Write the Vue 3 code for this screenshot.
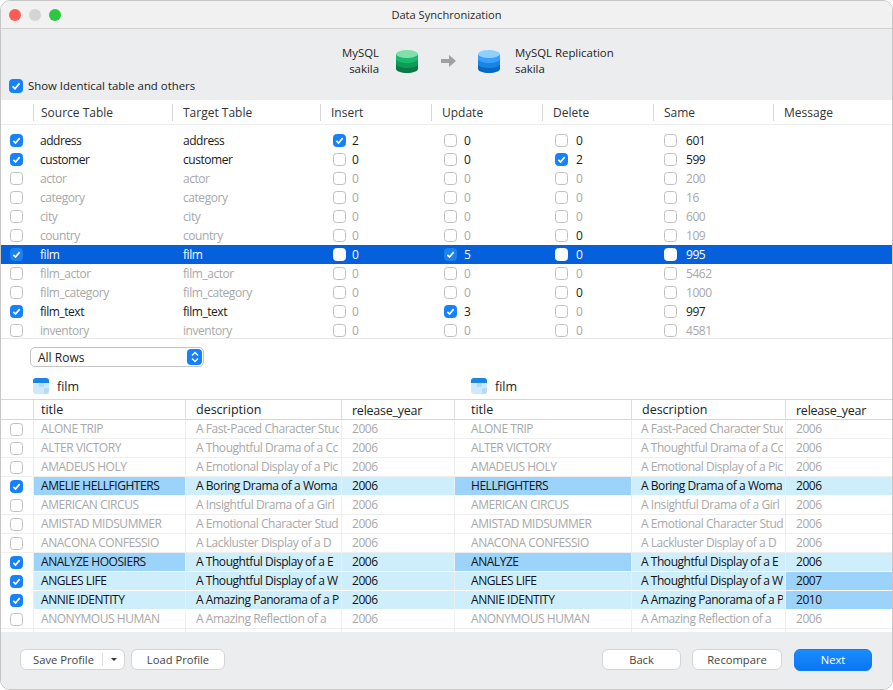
<script setup>
// cell = [value, checked, drawn dark]; active rows have a dark name and Same count
const syncRows = [
  { name: 'address', on: true, active: true, ins: [2, true, true], upd: [0, false, true], del: [0, false, true], same: 601 },
  { name: 'customer', on: true, active: true, ins: [0, false, true], upd: [0, false, true], del: [2, true, true], same: 599 },
  { name: 'actor', ins: [0], upd: [0], del: [0], same: 200 },
  { name: 'category', ins: [0], upd: [0], del: [0], same: 16 },
  { name: 'city', ins: [0], upd: [0], del: [0], same: 600 },
  { name: 'country', ins: [0], upd: [0], del: [0, false, true], same: 109 },
  { name: 'film', on: true, selected: true, ins: [0], upd: [5, true], del: [0], same: 995 },
  { name: 'film_actor', ins: [0], upd: [0], del: [0], same: 5462 },
  { name: 'film_category', ins: [0], upd: [0], del: [0, false, true], same: 1000 },
  { name: 'film_text', on: true, active: true, ins: [0], upd: [3, true, true], del: [0], same: 997 },
  { name: 'inventory', ins: [0], upd: [0], del: [0], same: 4581 }
]

const syncColumns = ['ins', 'upd', 'del']

// hi: cells with the darker blue
const dataRows = [
  { on: false, hi: [], cells: ['ALONE TRIP', 'A Fast-Paced Character Stuc', '2006', 'ALONE TRIP', 'A Fast-Paced Character Stuc', '2006'] },
  { on: false, hi: [], cells: ['ALTER VICTORY', 'A Thoughtful Drama of a Cc', '2006', 'ALTER VICTORY', 'A Thoughtful Drama of a Cc', '2006'] },
  { on: false, hi: [], cells: ['AMADEUS HOLY', 'A Emotional Display of a Pic', '2006', 'AMADEUS HOLY', 'A Emotional Display of a Pic', '2006'] },
  { on: true, hi: [0, 3], cells: ['AMELIE HELLFIGHTERS', 'A Boring Drama of a Woma', '2006', 'HELLFIGHTERS', 'A Boring Drama of a Woma', '2006'] },
  { on: false, hi: [], cells: ['AMERICAN CIRCUS', 'A Insightful Drama of a Girl', '2006', 'AMERICAN CIRCUS', 'A Insightful Drama of a Girl', '2006'] },
  { on: false, hi: [], cells: ['AMISTAD MIDSUMMER', 'A Emotional Character Stud', '2006', 'AMISTAD MIDSUMMER', 'A Emotional Character Stud', '2006'] },
  { on: false, hi: [], cells: ['ANACONA CONFESSIO', 'A Lackluster Display of a D', '2006', 'ANACONA CONFESSIO', 'A Lackluster Display of a D', '2006'] },
  { on: true, hi: [0, 3], cells: ['ANALYZE HOOSIERS', 'A Thoughtful Display of a E', '2006', 'ANALYZE', 'A Thoughtful Display of a E', '2006'] },
  { on: true, hi: [5], cells: ['ANGLES LIFE', 'A Thoughtful Display of a W', '2006', 'ANGLES LIFE', 'A Thoughtful Display of a W', '2007'] },
  { on: true, hi: [5], cells: ['ANNIE IDENTITY', 'A Amazing Panorama of a P', '2006', 'ANNIE IDENTITY', 'A Amazing Panorama of a P', '2010'] },
  { on: false, hi: [], cells: ['ANONYMOUS HUMAN', 'A Amazing Reflection of a', '2006', 'ANONYMOUS HUMAN', 'A Amazing Reflection of a', '2006'] }
]

const dataHeads = ['title', 'description', 'release_year', 'title', 'description', 'release_year']
</script>

<template>
  <div class="window">
    <div class="titlebar">
      <div class="lights">
        <span class="light red"></span>
        <span class="light grey"></span>
        <span class="light green"></span>
      </div>
      <span class="title">Data Synchronization</span>
    </div>

    <div class="connection">
      <div class="endpoints">
        <div class="endpoint source">MySQL<br />sakila</div>
        <svg class="db" width="22" height="23" viewBox="0 0 22 23">
          <path d="M0 4v15c0 2 5 4 11 4s11-2 11-4V4z" fill="#0a7a44" />
          <path d="M0 4v10c0 2 5 4 11 4s11-2 11-4V4z" fill="#0f9a58" />
          <path d="M0 4v5c0 2 5 4 11 4s11-2 11-4V4z" fill="#17b96b" />
          <ellipse cx="11" cy="4" rx="11" ry="4" fill="#7fe0a9" />
        </svg>
        <svg class="arrow" width="15" height="12" viewBox="0 0 15 12">
          <path d="M0 4h8V0l7 6-7 6V8H0z" fill="#a0a0a0" />
        </svg>
        <svg class="db" width="22" height="23" viewBox="0 0 22 23">
          <path d="M0 4v15c0 2 5 4 11 4s11-2 11-4V4z" fill="#0469c4" />
          <path d="M0 4v10c0 2 5 4 11 4s11-2 11-4V4z" fill="#1a84e4" />
          <path d="M0 4v5c0 2 5 4 11 4s11-2 11-4V4z" fill="#38a0fb" />
          <ellipse cx="11" cy="4" rx="11" ry="4" fill="#8fd0fd" />
        </svg>
        <div class="endpoint target">MySQL Replication<br />sakila</div>
      </div>
      <label class="show-identical">
        <span class="box big checked">
          <svg viewBox="0 0 14 14"><path d="M3 7.4l2.8 2.8 5.2-6.2" /></svg>
        </span>
        Show Identical table and others
      </label>
    </div>

    <div class="sync-head sync-grid">
      <span></span>
      <span class="first">Source Table</span>
      <span>Target Table</span>
      <span>Insert</span>
      <span>Update</span>
      <span>Delete</span>
      <span>Same</span>
      <span>Message</span>
    </div>

    <div class="sync-body">
      <div
        v-for="row in syncRows"
        :key="row.name"
        class="sync-row sync-grid"
        :class="{ active: row.active, selected: row.selected }"
      >
        <div class="cell-check">
          <span class="box" :class="{ checked: row.on }">
            <svg v-if="row.on" viewBox="0 0 14 14"><path d="M3 7.4l2.8 2.8 5.2-6.2" /></svg>
          </span>
        </div>
        <div class="first name">{{ row.name }}</div>
        <div class="name">{{ row.name }}</div>
        <div v-for="col in syncColumns" :key="col" class="cell-count" :class="col">
          <span class="box" :class="{ checked: row[col][1] }">
            <svg v-if="row[col][1]" viewBox="0 0 14 14"><path d="M3 7.4l2.8 2.8 5.2-6.2" /></svg>
          </span>
          <span :class="{ dark: row[col][2] }">{{ row[col][0] }}</span>
        </div>
        <div class="cell-count same">
          <span class="box"></span>
          <span class="name">{{ row.same }}</span>
        </div>
        <div></div>
      </div>
    </div>

    <div class="detail">
      <div class="filter-row">
        <div class="select">
          All Rows
          <span class="select-btn">
            <svg width="10" height="14" viewBox="0 0 10 14"><path d="M2 5.5L5 2.5l3 3M2 8.5l3 3 3-3" /></svg>
          </span>
        </div>
      </div>
      <div class="table-labels">
        <div class="table-label">
          <svg width="16" height="16" viewBox="0 0 16 16">
            <rect width="16" height="16" rx="3" fill="#cfe8fc" />
            <path d="M0 5V3a3 3 0 0 1 3-3h10a3 3 0 0 1 3 3v2z" fill="#1b86e2" />
            <path d="M6 5h5v4H6zM11 10h5v3a3 3 0 0 1-3 3h-2z" fill="#b3dbfa" />
          </svg>
          film
        </div>
        <div class="table-label right">
          <svg width="16" height="16" viewBox="0 0 16 16">
            <rect width="16" height="16" rx="3" fill="#cfe8fc" />
            <path d="M0 5V3a3 3 0 0 1 3-3h10a3 3 0 0 1 3 3v2z" fill="#1b86e2" />
            <path d="M6 5h5v4H6zM11 10h5v3a3 3 0 0 1-3 3h-2z" fill="#b3dbfa" />
          </svg>
          film
        </div>
      </div>

      <div class="data-head data-grid">
        <span></span>
        <span v-for="(head, i) in dataHeads" :key="i">{{ head }}</span>
      </div>
      <div
        v-for="(row, r) in dataRows"
        :key="r"
        class="data-row data-grid"
        :class="{ changed: row.on }"
      >
        <div class="cell-check">
          <span class="box" :class="{ checked: row.on }">
            <svg v-if="row.on" viewBox="0 0 14 14"><path d="M3 7.4l2.8 2.8 5.2-6.2" /></svg>
          </span>
        </div>
        <div v-for="(cell, i) in row.cells" :key="i" :class="{ hi: row.hi.includes(i) }">{{ cell }}</div>
      </div>
      <div class="data-tail data-grid">
        <span></span><span></span><span></span><span></span><span></span><span></span><span></span>
      </div>
    </div>

    <div class="footer">
      <div class="split-btn">
        <span class="split-main">Save Profile</span>
        <span class="split-caret"></span>
      </div>
      <button class="btn load">Load Profile</button>
      <span class="spacer"></span>
      <button class="btn back">Back</button>
      <button class="btn recompare">Recompare</button>
      <button class="btn next">Next</button>
    </div>
  </div>
</template>

<style>
html,
body {
  margin: 0;
  background: #fff;
}
</style>

<style scoped>
.window {
  box-sizing: border-box;
  width: 893px;
  height: 690px;
  display: flex;
  flex-direction: column;
  border: 1px solid #c6c6c6;
  border-radius: 10px;
  overflow: hidden;
  background: #fff;
  color: #222;
  font-family: "Open Sans", "Noto Sans", sans-serif;
  font-size: 12px;
}

.titlebar {
  flex: none;
  height: 27px;
  display: flex;
  align-items: center;
  justify-content: center;
  position: relative;
  background: #f1f1f1;
  border-bottom: 1px solid #d2d2d2;
}
.lights {
  position: absolute;
  left: 8px;
  top: 8px;
  display: flex;
  gap: 8px;
}
.light {
  width: 12px;
  height: 12px;
  border-radius: 50%;
}
.light.red { background: #fc5c57; }
.light.grey { background: #d4d4d4; }
.light.green { background: #2bc840; }
.title { color: #2a2a2a; font-size: 11.1px; }

.connection {
  flex: none;
  height: 71px;
  background: #ecedef;
  position: relative;
  font-size: 11.4px;
}
.endpoints {
  display: flex;
  align-items: center;
  height: 40px;
  padding-top: 12px;
  margin-left: 340px;
  line-height: 16px;
}
.endpoint { width: 38px; }
.endpoint.source { text-align: right; }
.endpoint.target { width: auto; margin-left: 15px; }
.db { margin-left: 17px; }
.arrow { margin-left: 23px; }
.arrow + .db { margin-left: 22px; }
.show-identical {
  position: absolute;
  left: 8px;
  top: 49px;
  display: flex;
  align-items: center;
  gap: 5px;
}

.box {
  box-sizing: border-box;
  flex: none;
  width: 13px;
  height: 13px;
  display: inline-block;
  background: #fff;
  border: 1px solid #c0c0c0;
  border-radius: 3.5px;
}
.box.big { width: 14px; height: 14px; }
.box svg {
  display: block;
  width: 100%;
  height: 100%;
  fill: none;
  stroke: #fff;
  stroke-width: 2.1;
}
.box.checked {
  background: #1581fa;
  border-color: #1581fa;
}

.sync-grid {
  display: grid;
  grid-template-columns: 32px 139px 148px 111px 111px 111px 120px 119px;
}
.sync-head {
  flex: none;
  height: 25px;
  line-height: 25px;
  border-bottom: 1px solid #ececec;
  box-sizing: border-box;
  color: #333;
}
.sync-head span {
  padding-left: 11px;
  position: relative;
}
.sync-head span.first { padding-left: 8px; }
.sync-head span + span::before {
  content: "";
  position: absolute;
  left: 0;
  top: 4px;
  bottom: 4px;
  border-left: 1px solid #d6d6d6;
}
.sync-body {
  flex: none;
  height: 214px;
  padding-top: 6px;
  box-sizing: border-box;
  overflow: hidden;
  border-bottom: 1px solid #e6e6e6;
}
.sync-row {
  height: 19px;
  line-height: 19px;
  color: #a8a8a8;
}
.sync-row > div {
  padding-left: 11px;
  white-space: nowrap;
  display: flex;
  align-items: center;
}
.sync-row > div.first { padding-left: 7px; }
.sync-row > div.cell-check { padding-left: 9px; }
.sync-row > div.cell-count {
  padding-left: 13px;
  gap: 7px;
}
.sync-row > div.cell-count.ins { gap: 6px; }
.sync-row > div.cell-count.del { padding-left: 13px; gap: 8px; }
.sync-row > div.cell-count.same { padding-left: 11px; gap: 9px; }
.sync-row .name { letter-spacing: -0.45px; }
.sync-row .dark { color: #1a1a1a; }
.sync-row .box.checked { border-color: #1581fa; }
.sync-row.active .name { color: #1a1a1a; }
.sync-row.selected {
  background: #0560dc;
  color: #fff;
}
.sync-row.selected .name,
.sync-row.selected .dark { color: #fff; }
.sync-row.selected .box { border-color: #fff; }
.sync-row.selected .box.checked {
  background: #1b80f0;
  border-color: #1b80f0;
}

.detail {
  flex: 1;
  min-height: 0;
  background: #fff;
}
.filter-row {
  height: 36px;
  padding: 8px 0 0 29px;
  box-sizing: border-box;
}
.select {
  box-sizing: border-box;
  width: 174px;
  height: 20px;
  display: flex;
  align-items: center;
  justify-content: space-between;
  padding: 0 1px 0 7px;
  border: 1px solid #c4c4c4;
  border-radius: 5px;
  color: #222;
}
.select-btn {
  width: 15px;
  height: 16px;
  display: flex;
  align-items: center;
  justify-content: center;
  background: #1581fa;
  border-radius: 4px;
}
.select-btn svg {
  fill: none;
  stroke: #fff;
  stroke-width: 1.3;
}
.table-labels {
  display: flex;
  height: 24px;
  padding-bottom: 2px;
  box-sizing: border-box;
  align-items: center;
}
.table-label {
  width: 437px;
  padding-left: 32px;
  box-sizing: border-box;
  display: flex;
  align-items: center;
  gap: 8px;
  font-size: 12.5px;
}
.table-label.right { padding-left: 33px; width: auto; }

.data-grid {
  display: grid;
  grid-template-columns: 32px 152px 156px 113px 177px 154px 107px;
}
.data-head {
  height: 21px;
  line-height: 20px;
  box-sizing: border-box;
  border-top: 1px solid #d6d6d6;
  border-bottom: 1px solid #d6d6d6;
  font-size: 12.5px;
}
.data-head span + span { border-left: 1px solid #dcdcdc; padding-left: 10px; }
.data-head span:nth-child(2) { padding-left: 7px; }
.data-head span:nth-child(5) { padding-left: 16px; }
.data-head span:nth-child(4),
.data-head span:nth-child(7) {
  letter-spacing: -0.25px;
  line-height: 22px;
}
.data-row {
  height: 19px;
  line-height: 18px;
  box-sizing: border-box;
  border-bottom: 1px solid #eeeeee;
  color: #a8a8a8;
  letter-spacing: -0.45px;
}
.data-row > div {
  padding-left: 10px;
  overflow: hidden;
  white-space: nowrap;
  border-left: 1px solid #eeeeee;
  border-right: 2px solid transparent;
}
.data-row > div.cell-check {
  border-left: 0;
  padding-left: 9px;
  display: flex;
  align-items: center;
}
.data-row > div:nth-child(2) { padding-left: 7px; }
.data-row > div:nth-child(5) { padding-left: 16px; }
.data-row > div:nth-child(6) { padding-left: 9px; }
.data-row.changed {
  background: #cfeefc;
  color: #111;
  border-bottom-color: #fff;
}
.data-row.changed > div.cell-check { background: #fff; }
.data-row > div.hi { background: #9bd3fa; }
.data-tail { height: 3px; }
.data-tail span + span { border-left: 1px solid #eeeeee; }

.footer {
  flex: none;
  height: 57px;
  display: flex;
  align-items: center;
  padding: 0 20px 2px 19px;
  background: #ecedef;
  box-sizing: border-box;
  color: #444;
  font-size: 11.2px;
}
.spacer { flex: 1; }
.btn {
  font: inherit;
  color: inherit;
  height: 21px;
  padding: 0;
  background: #fff;
  border: 1px solid #d4d4d4;
  border-radius: 6px;
}
.split-btn {
  box-sizing: border-box;
  width: 105px;
  height: 21px;
  display: flex;
  align-items: center;
  background: #fff;
  border: 1px solid #d4d4d4;
  border-radius: 6px;
}
.split-main {
  width: 82px;
  padding-left: 4px;
  box-sizing: border-box;
  text-align: center;
  border-right: 1px solid #dcdcdc;
  line-height: 13px;
}
.split-caret {
  margin-left: 8px;
  border: 3px solid transparent;
  border-top: 3.5px solid #333;
  border-bottom: 0;
}
.load { width: 94px; margin-left: 6px; }
.back { width: 79px; }
.recompare { width: 90px; margin-left: 11px; }
.next {
  width: 78px;
  height: 22px;
  margin-left: 12px;
  background: linear-gradient(#1a8cfd, #0a76f2);
  border-color: #0f7ef6;
  color: #fff;
}
</style>
